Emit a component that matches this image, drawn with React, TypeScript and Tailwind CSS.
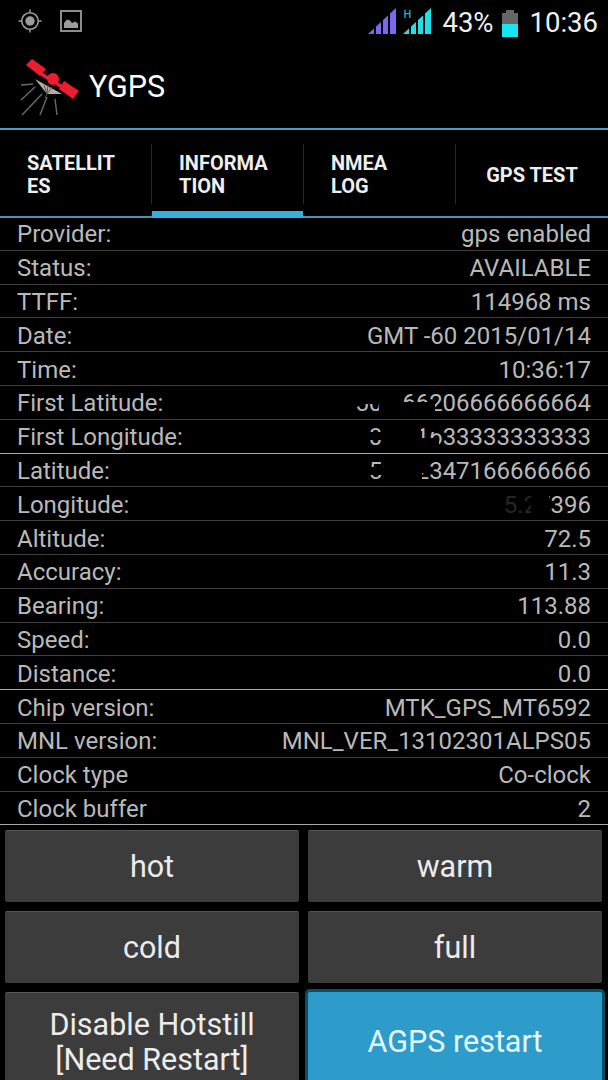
const FONT = "font-['Roboto',sans-serif]";

interface InfoRow {
  label: string;
  value: string;
  masks?: string[];
  strong?: boolean;
}

// the coordinates in the screenshot are blanked out, the masks leave the same scraps showing
const rows: InfoRow[] = [
  { label: "Provider:", value: "gps enabled" },
  { label: "Status:", value: "AVAILABLE" },
  { label: "TTFF:", value: "114968 ms" },
  { label: "Date:", value: "GMT -60 2015/01/14" },
  { label: "Time:", value: "10:36:17" },
  {
    label: "First Latitude:",
    value: "50.066206666666664",
    masks: [
      "left-0 top-0 h-[52%] w-[26px]",
      "left-[24px] top-0 h-full w-[22px]",
      "left-[44px] top-[45%] h-[55%] w-[36px]",
    ],
  },
  {
    label: "First Longitude:",
    value: "05.11633333333333",
    masks: [
      "left-0 top-[30%] h-[30%] w-[14px]",
      "left-[12px] top-0 h-full w-[40px]",
      "left-[50px] top-[55%] h-[45%] w-[20px]",
      "left-[62px] top-0 h-[30%] w-[10px]",
    ],
    strong: true,
  },
  {
    label: "Latitude:",
    value: "50.12347166666666",
    masks: [
      "left-0 top-[35%] h-[30%] w-[16px]",
      "left-[15px] top-0 h-full w-[38px]",
      "left-[52px] top-0 h-[60%] w-[8px]",
    ],
  },
  {
    label: "Longitude:",
    value: "5.27396",
    masks: ["left-0 top-0 h-full w-[28px] opacity-[0.8]", "left-[27px] top-0 h-full w-[18px]"],
  },
  { label: "Altitude:", value: "72.5" },
  { label: "Accuracy:", value: "11.3" },
  { label: "Bearing:", value: "113.88" },
  { label: "Speed:", value: "0.0" },
  { label: "Distance:", value: "0.0", strong: true },
  { label: "Chip version:", value: "MTK_GPS_MT6592" },
  { label: "MNL version:", value: "MNL_VER_13102301ALPS05" },
  { label: "Clock type", value: "Co-clock" },
  { label: "Clock buffer", value: "2", strong: true },
];

const tabs = [
  { lines: ["SATELLIT", "ES"] },
  { lines: ["INFORMA", "TION"], active: true },
  { lines: ["NMEA", "LOG"] },
  { lines: ["GPS TEST"], center: true },
];

const SignalBars = ({ color }: { color: string }) => (
  <svg width="28" height="26" viewBox="0 0 28 26" fill={color}>
    <path d="M0 26 L6 20.4 V26 Z" />
    <path d="M8 18.6 L13 13.9 V26 H8 Z" />
    <path d="M15 12 L20 7.4 V26 H15 Z" />
    <path d="M22 5.6 L28 0 V26 H22 Z" />
  </svg>
);

const LocationIcon = () => (
  <svg width="24" height="24" viewBox="0 0 24 24" fill="none" stroke="#9c9c9c">
    <circle cx="12" cy="12" r="4.7" fill="#9c9c9c" stroke="none" />
    <circle cx="12" cy="12" r="8.3" strokeWidth="1.6" />
    <path d="M12 0.5v3M12 20.5v3M0.5 12h3M20.5 12h3" strokeWidth="1.5" />
  </svg>
);

const PictureIcon = () => (
  <svg width="24" height="24" viewBox="0 0 24 24" fill="none">
    <rect x="2" y="2" width="20" height="20" stroke="#9c9c9c" strokeWidth="1.8" />
    <path d="M5 19 V14 L8 10.5 L11 11.5 L13 14 L16 12.5 L19 14.5 V19 Z" fill="#9c9c9c" />
  </svg>
);

const SatelliteLogo = () => (
  <svg width="62" height="62" viewBox="0 0 62 62">
    <g stroke="#6a6a6a" strokeWidth="1.4" fill="none">
      <path d="M14 28 L2 29" />
      <path d="M16 31 L2 44" />
      <path d="M23 38 L3 59" />
      <path d="M28 41 L21 59" />
      <path d="M36 43 L38 59" />
    </g>
    <path d="M21 15 L45 30 L43 33 L19 18 Z" fill="#ed1c2e" />
    <circle cx="34" cy="23" r="6" fill="#ed1c2e" />
    <path d="M13 3 L27 13 L21 20 L7 9 Z" fill="#ed1c2e" />
    <path d="M45 25 L60 35 L54 43 L40 33 Z" fill="#ed1c2e" />
    <path d="M16 23 L43 38 L28 38 Z" fill="#b8aaa0" />
    <path d="M25 29 L28 38 M29 29 L28 38 M33 31 L28 38 M28 38 L26 42" stroke="#555555" strokeWidth="1" />
  </svg>
);

const Button = ({ lines, primary }: { lines: string[]; primary?: boolean }) => (
  <button
    className={`flex h-full w-full flex-col items-center justify-center rounded-[2px] text-[30.5px] leading-[35px] ${
      primary
        ? "bg-[#2d9cca] text-[#e4f6fc] shadow-[0_0_0_3px_#0f4c66]"
        : "border-t border-[#555555] bg-[#3c3c3c] text-[#ececec]"
    }`}
  >
    {lines.map((line) => (
      <span key={line}>{line}</span>
    ))}
  </button>
);

export default function App() {
  return (
    <div className={`${FONT} flex h-[1080px] w-[608px] flex-col overflow-hidden bg-black`}>
      <header className="flex h-[46px] shrink-0 items-center justify-between pl-[18px] pr-[10px]">
        <div className="mb-[4px] flex items-center gap-[17px]">
          <LocationIcon />
          <PictureIcon />
        </div>
        <div className="flex items-center">
          <div className="mb-[4px]">
            <SignalBars color="#7b68f0" />
          </div>
          <div className="relative mb-[4px] ml-[7px]">
            <span className="absolute left-0 top-[1px] text-[11px] font-medium leading-[11px] text-[#35a6c4]">
              H
            </span>
            <SignalBars color="#1fe0e6" />
          </div>
          <span className="ml-[11px] text-[27.5px] text-[#efefef]">43%</span>
          <div className="ml-[8px] flex h-[27px] w-[16px] flex-col">
            <div className="mx-auto h-[3px] w-[8px] bg-[#666666]" />
            <div className="h-[11px] bg-[#666666]" />
            <div className="flex-1 bg-[#16e6f2]" />
          </div>
          <span className="ml-[12px] text-[27.5px] text-[#efefef]">10:36</span>
        </div>
      </header>

      <div className="flex h-[84px] shrink-0 items-center border-b-2 border-[#4d9dc0] pl-[19px]">
        <SatelliteLogo />
        <span className="ml-[8px] text-[30.5px] text-white">YGPS</span>
      </div>

      <nav className="flex h-[88px] shrink-0 border-b-2 border-[#4d90b0]">
        {tabs.map((tab, i) => (
          <div key={tab.lines[0]} className="relative flex-1">
            <div
              className={`flex h-full flex-col justify-center pt-[4px] text-[20px] font-bold leading-[23px] text-[#eeeeee] ${
                tab.center ? "items-center" : "pl-[27px]"
              }`}
            >
              {tab.lines.map((line) => (
                <span key={line}>{line}</span>
              ))}
            </div>
            {i < 3 && <div className="absolute right-0 top-[14px] h-[60px] w-px bg-[#2a2a2a]" />}
            {tab.active && <div className="absolute bottom-[-2px] left-0 h-[7px] w-[151px] bg-[#33b0e0]" />}
          </div>
        ))}
      </nav>

      <div className="-mt-[1px] shrink-0">
        {rows.map((row) => (
          <div
            key={row.label}
            className={`flex h-[33.8px] items-center justify-between border-b px-[17px] pt-[2px] text-[24px] leading-none text-[#b9b9b9] ${
              row.strong ? "border-[#a8a8a8]" : "border-[#3e3e3e]"
            }`}
          >
            <span>{row.label}</span>
            <span className="relative">
              {row.value}
              {row.masks?.map((mask) => (
                <span key={mask} className={`absolute bg-black ${mask}`} />
              ))}
            </span>
          </div>
        ))}
      </div>

      <div className="grid shrink-0 grid-cols-[294px_294px] grid-rows-[72px_72px_98px] gap-[9px] px-[5px] pt-[5px]">
        <Button lines={["hot"]} />
        <Button lines={["warm"]} />
        <Button lines={["cold"]} />
        <Button lines={["full"]} />
        <Button lines={["Disable Hotstill", "[Need Restart]"]} />
        <Button lines={["AGPS restart"]} primary />
      </div>
    </div>
  );
}
